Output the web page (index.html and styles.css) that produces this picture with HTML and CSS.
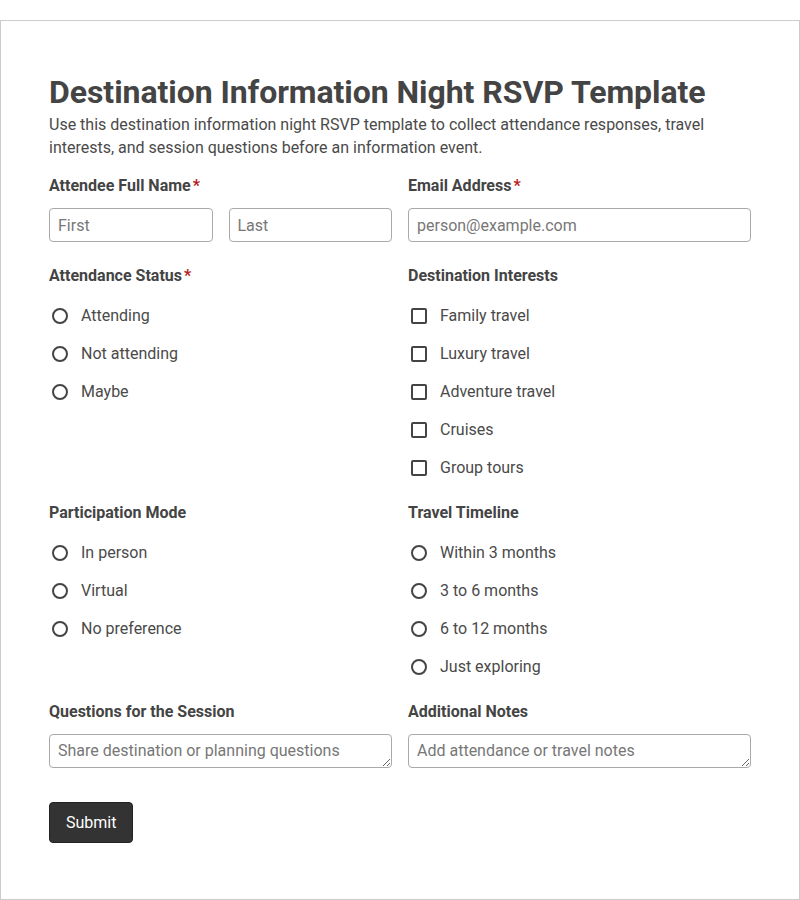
FILE: index.html
```html
<!doctype html>
<html>
    <head>
        <meta charset="utf-8">
        <meta name="viewport" content="width=device-width, initial-scale=1.0">
        <title>Destination Information Night RSVP Template</title>
        <link rel="stylesheet" href="styles.css">
    </head>
    <body>
        <form class="form-card" onsubmit="return false;">
            <h1 class="form-title">Destination Information Night RSVP Template</h1>
            <p class="form-desc">Use this destination information night RSVP template to collect attendance responses, travel interests, and session questions before an information event.</p>

            <div class="form-grid">
                <div class="field">
                    <label class="field-label">Attendee Full Name<span class="req">*</span></label>
                    <div class="name-row">
                        <input type="text" class="text-input" name="first_name" placeholder="First" />
                        <input type="text" class="text-input" name="last_name" placeholder="Last" />
                    </div>
                </div>
                <div class="field">
                    <label class="field-label">Email Address<span class="req">*</span></label>
                    <input type="email" class="text-input" name="email" placeholder="person@example.com" />
                </div>

                <div class="field">
                    <label class="field-label">Attendance Status<span class="req">*</span></label>
                    <div class="options">
                        <label class="option"><input type="radio" name="status" /> Attending</label>
                        <label class="option"><input type="radio" name="status" /> Not attending</label>
                        <label class="option"><input type="radio" name="status" /> Maybe</label>
                    </div>
                </div>
                <div class="field">
                    <label class="field-label">Destination Interests</label>
                    <div class="options">
                        <label class="option"><input type="checkbox" name="interests" /> Family travel</label>
                        <label class="option"><input type="checkbox" name="interests" /> Luxury travel</label>
                        <label class="option"><input type="checkbox" name="interests" /> Adventure travel</label>
                        <label class="option"><input type="checkbox" name="interests" /> Cruises</label>
                        <label class="option"><input type="checkbox" name="interests" /> Group tours</label>
                    </div>
                </div>

                <div class="field">
                    <label class="field-label">Participation Mode</label>
                    <div class="options">
                        <label class="option"><input type="radio" name="mode" /> In person</label>
                        <label class="option"><input type="radio" name="mode" /> Virtual</label>
                        <label class="option"><input type="radio" name="mode" /> No preference</label>
                    </div>
                </div>
                <div class="field">
                    <label class="field-label">Travel Timeline</label>
                    <div class="options">
                        <label class="option"><input type="radio" name="timeline" /> Within 3 months</label>
                        <label class="option"><input type="radio" name="timeline" /> 3 to 6 months</label>
                        <label class="option"><input type="radio" name="timeline" /> 6 to 12 months</label>
                        <label class="option"><input type="radio" name="timeline" /> Just exploring</label>
                    </div>
                </div>

                <div class="field">
                    <label class="field-label">Questions for the Session</label>
                    <textarea class="text-input text-area" name="questions" rows="1" placeholder="Share destination or planning questions"></textarea>
                </div>
                <div class="field">
                    <label class="field-label">Additional Notes</label>
                    <textarea class="text-input text-area" name="notes" rows="1" placeholder="Add attendance or travel notes"></textarea>
                </div>
            </div>

            <div class="form-actions">
                <button type="submit" class="button-submit">Submit</button>
            </div>
        </form>
    </body>
</html>
```

FILE: styles.css
```css
html {
    padding: 0;
    margin: 0;
}
body {
    font-family: Roboto, "Liberation Sans", sans-serif;
    font-size: 16px;
    color: #4a4a4a;
    background: #fff;
    margin: 0;
    padding: 20px 0 0;
}

.form-card {
    border: solid 1px #ccc;
    padding: 52px 48px 56px;
}
.form-title {
    font-size: 32px;
    font-weight: bold;
    line-height: 38px;
    letter-spacing: -0.05px;
    margin: 0 0 2px;
    color: #444;
}
.form-desc {
    line-height: 23px;
    margin: 0;
}

.form-grid {
    display: grid;
    grid-template-columns: 1fr 1fr;
    column-gap: 16px;
    row-gap: 24px;
    margin-top: 17px;
}
.field-label {
    display: block;
    font-weight: bold;
    line-height: 20px;
    margin-bottom: 12px;
    color: #444;
}
.req {
    color: #b71c1c;
    margin-left: 2px;
}

.name-row {
    display: grid;
    grid-template-columns: 1fr 1fr;
    gap: 16px;
}
.text-input {
    display: block;
    width: 100%;
    box-sizing: border-box;
    height: 34px;
    padding: 6px 8px;
    line-height: 20px;
    font-family: inherit;
    font-size: 16px;
    color: #444;
    border: solid 1px #aaa;
    border-radius: 4px;
    background: #fff;
    margin: 0;
}
.text-input::placeholder {
    color: #777;
}
.text-area {
    resize: vertical;
}

.options {
    display: flex;
    flex-direction: column;
    gap: 16px;
    padding-top: 7px;
}
.option {
    display: flex;
    align-items: center;
    gap: 13px;
    line-height: 22px;
}
.option input {
    appearance: none;
    -webkit-appearance: none;
    width: 16px;
    height: 16px;
    margin: 0 0 0 3px;
    border: solid 2px #444;
    background: #fff;
    flex: none;
}
.option input[type="radio"] {
    border-radius: 50%;
}
.option input[type="checkbox"] {
    border-radius: 2px;
}

.form-actions {
    margin-top: 34px;
}
.button-submit {
    font-family: inherit;
    font-size: 16px;
    line-height: 19px;
    padding: 10px 16px;
    color: #fff;
    background: #333;
    border: solid 1px #222;
    border-radius: 4px;
}
```
